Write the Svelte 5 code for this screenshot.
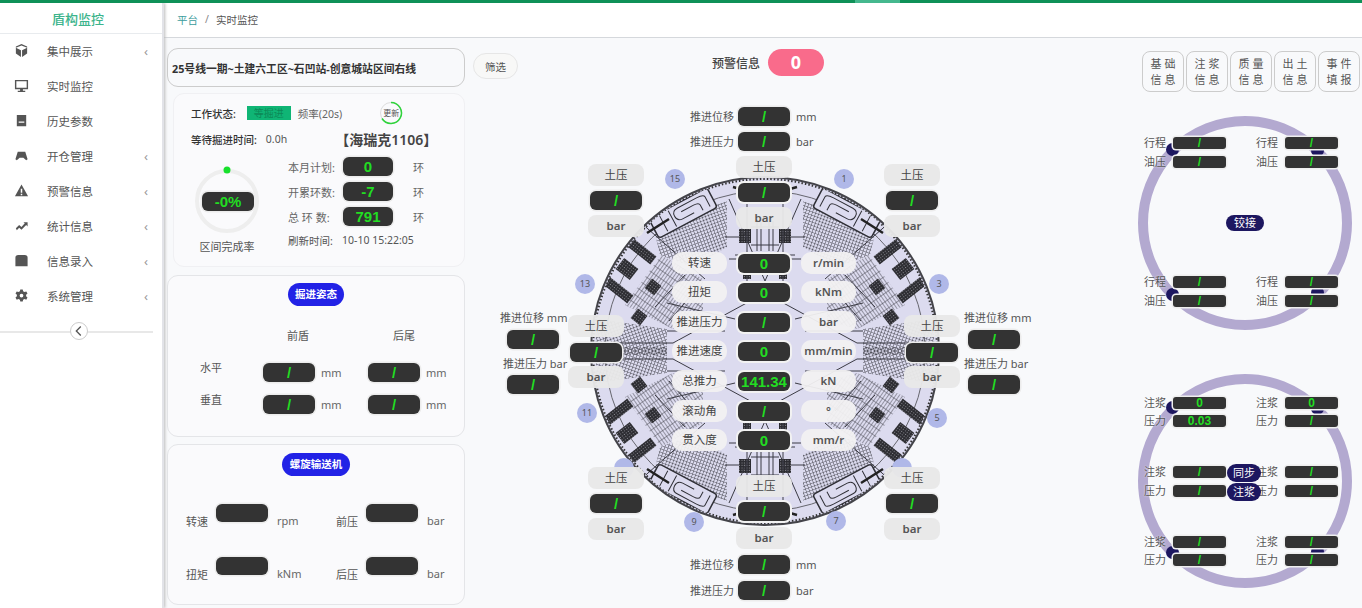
<script>
  const menu = [
    { name: "集中展示", icon: "cube", more: true },
    { name: "实时监控", icon: "monitor", more: false },
    { name: "历史参数", icon: "book", more: false },
    { name: "开仓管理", icon: "pad", more: true },
    { name: "预警信息", icon: "warn", more: true },
    { name: "统计信息", icon: "trend", more: true },
    { name: "信息录入", icon: "dome", more: true },
    { name: "系统管理", icon: "gear", more: true }
  ];
  const buttons = [["基 础", "信 息"], ["注 浆", "信 息"], ["质 量", "信 息"], ["出 土", "信 息"], ["事 件", "填 报"]];

  // stage origin is x=470, y=48 in the page
  const at = (x, y) => `left:${x - 470}px;top:${y - 48}px`;

  const rows = [
    ["转速", "0", "r/min", 263], ["扭矩", "0", "kNm", 292], ["推进压力", "/", "bar", 322],
    ["推进速度", "0", "mm/min", 351], ["总推力", "141.34", "kN", 381], ["滚动角", "/", "°", 411], ["贯入度", "0", "mm/r", 440]
  ];
  const pressure = [
    [736, 156, 183, 207, true], [736, 475, 502, 527, true],
    [588, 164, 191, 215], [884, 164, 191, 215],
    [588, 467, 494, 518], [884, 467, 494, 518],
    [568, 315, 343, 366], [904, 315, 343, 366]
  ];
  const thrust = [
    [690, 738, 796, 107, 117, "推进位移", "mm"], [690, 738, 796, 132, 142, "推进压力", "bar"],
    [690, 738, 796, 555, 565, "推进位移", "mm"], [690, 738, 796, 581, 591, "推进压力", "bar"]
  ];
  const sideThrust = [
    [500, 507, 330, 318, "推进位移 mm"], [503, 507, 375, 364, "推进压力 bar"],
    [964, 968, 330, 318, "推进位移 mm"], [964, 968, 375, 364, "推进压力 bar"]
  ];
  const badges = [
    [15, 675, 179], [1, 844, 179], [13, 585, 284], [3, 939, 284],
    [11, 587, 413], [5, 937, 418], [9, 694, 522], [7, 836, 521], ["", 624, 468], ["", 902, 468]
  ];

  const hinge = [
    ["行程", 11, "/"], ["油压", 30, "/"], ["行程", 150, "/"], ["油压", 169, "/"]
  ];
  const grout = [
    ["注浆", 13, "0", "0"], ["压力", 31, "0.03", "/"], ["注浆", 82, "/", "/"],
    ["压力", 101, "/", "/"], ["注浆", 152, "/", "/"], ["压力", 170, "/", "/"]
  ];
</script>

<div class="progress"><span></span></div>
<div class="shell">
  <aside class="sidebar">
    <div class="brand">盾构监控</div>
    {#each menu as item}
      <div class="item">
        <svg class="icon" viewBox="0 0 16 16">
          {#if item.icon === "cube"}
            <path d="M8 1l6 2.600v7.600L8.600 15V7.600L14 5 8 2.600 2 5l5.400 2.600V15L2 11.200V3.600z" />
          {:else if item.icon === "monitor"}
            <path fill-rule="evenodd" d="M1 2h14v10H9.500v1.500H12V15H4v-1.500h2.500V12H1zm1.500 1.500v7h11v-7z" />
          {:else if item.icon === "book"}
            <path fill-rule="evenodd" d="M3 2h10v12H3zm2 7v1.300h6V9z" />
          {:else if item.icon === "pad"}
            <path d="M4 4h8l2.500 8-1.500 1-3-2.500H6L3 13l-1.500-1z" />
          {:else if item.icon === "warn"}
            <path fill-rule="evenodd" d="M8 1.500L15 14H1zM7.200 6v4.500h1.600V6zm0 5.500V13h1.600v-1.500z" />
          {:else if item.icon === "trend"}
            <path d="M2 11l3.500-3.500 2.500 2 3.500-4L10 4.500h4.500V9L13 7.500 8 12.500l-2.500-2L3 13z" />
          {:else if item.icon === "dome"}
            <path d="M1.500 14V5Q1.500 2 4.500 2h7q3 0 3 3v9z" />
          {:else}
            <path fill-rule="evenodd" d="M6.700 1.500h2.600l.4 2 1.500.8 1.900-.7 1.300 2.300-1.500 1.300v1.600l1.500 1.300-1.300 2.300-1.900-.7-1.500.8-.4 2H6.700l-.4-2-1.500-.8-1.900.7-1.300-2.300 1.500-1.300V7.200L1.600 5.900l1.300-2.300 1.900.7 1.500-.8zM8 6a2 2 0 100 4 2 2 0 000-4z" />
          {/if}
        </svg>
        <span class="item-name">{item.name}</span>
        {#if item.more}<span class="chev">‹</span>{/if}
      </div>
    {/each}
    <div class="collapse">
      <span class="collapse-btn">
        <svg viewBox="0 0 18 18" width="16" height="16"><path d="M11 4L6 9l5 5" fill="none" stroke="#555" stroke-width="1.500" /></svg>
      </span>
    </div>
  </aside>

  <div class="main">
    <header class="topbar">
      <span class="crumb-link">平台</span><span class="crumb-sep">/</span><span>实时监控</span>
    </header>

    <div class="content">
      <section class="left">
        <div class="station">25号线一期~土建六工区~石凹站-创意城站区间右线</div>

        <div class="card status">
          <div class="status-row">
            <b>工作状态:</b>
            <span class="state">等掘进</span>
            <span class="freq">频率(20s)</span>
            <span class="refresh">
              <svg viewBox="0 0 24 24" width="24" height="24">
                <circle cx="12" cy="12" r="10.500" fill="none" stroke="#ddd" stroke-width="1" />
                <path d="M12 1.500A10.500 10.500 0 1 1 3 17.500" fill="none" stroke="#2fd33c" stroke-width="1.500" />
              </svg>
              <i>更新</i>
            </span>
          </div>
          <div class="status-row second-row">
            <b>等待掘进时间:</b>
            <span class="wait">0.0h</span>
            <strong>【海瑞克1106】</strong>
          </div>
          <div class="status-body">
            <div class="gauge-col">
              <div class="gauge">
                <svg viewBox="0 0 70 76" width="70" height="76">
                  <circle cx="35" cy="41" r="30" fill="none" stroke="#eeeeee" stroke-width="4" />
                  <circle cx="35" cy="10" r="3.500" fill="#17e02c" />
                </svg>
                <span class="val gauge-val">-0%</span>
              </div>
              <div class="gauge-label">区间完成率</div>
            </div>
            <div class="plan">
              <div class="plan-row"><label>本月计划:</label><span class="val small">0</span><em>环</em></div>
              <div class="plan-row"><label>开累环数:</label><span class="val small">-7</span><em>环</em></div>
              <div class="plan-row"><label>总 环 数:</label><span class="val small">791</span><em>环</em></div>
              <div class="plan-time"><label>刷新时间:</label><span>10-10 15:22:05</span></div>
            </div>
          </div>
        </div>

        <div class="card attitude">
          <div class="pill-wrap"><span class="pill">掘进姿态</span></div>
          <div class="att-grid">
            <span></span><span class="att-head">前盾</span><span class="att-head">后尾</span>
            <span class="att-name">水平</span>
            <div class="att-cell"><span class="val">/</span><em>mm</em></div>
            <div class="att-cell"><span class="val">/</span><em>mm</em></div>
            <span class="att-name">垂直</span>
            <div class="att-cell"><span class="val">/</span><em>mm</em></div>
            <div class="att-cell"><span class="val">/</span><em>mm</em></div>
          </div>
        </div>

        <div class="card screw">
          <div class="pill-wrap"><span class="pill">螺旋输送机</span></div>
          <div class="screw-grid">
            <div class="screw-cell"><label>转速</label><span class="val"></span><em>rpm</em></div>
            <div class="screw-cell"><label>前压</label><span class="val"></span><em>bar</em></div>
            <div class="screw-cell"><label>扭矩</label><span class="val"></span><em>kNm</em></div>
            <div class="screw-cell"><label>后压</label><span class="val"></span><em>bar</em></div>
          </div>
        </div>
      </section>

      <section class="stage">
        <button class="filter">筛选</button>
        <div class="alert"><span>预警信息</span><b>0</b></div>

        <svg class="cutter" viewBox="-180 -180 360 360" width="360" height="360">
          <defs>
            <pattern id="mesh" width="3.200" height="3.200" patternUnits="userSpaceOnUse" patternTransform="rotate(20)">
              <path d="M0 0H3.200M0 0V3.200" stroke="#34343c" stroke-width=".9" fill="none" />
            </pattern>
            <pattern id="stripes" width="3" height="7" patternUnits="userSpaceOnUse" patternTransform="rotate(-35)">
              <path d="M0 0V7M0 0H3" stroke="#3c3c44" stroke-width=".9" fill="none" />
            </pattern>
            <pattern id="dense" width="2.500" height="2.500" patternUnits="userSpaceOnUse">
              <rect width="2.500" height="2.500" fill="#2b2b30" />
              <path d="M0 0h1v1H0z" fill="#8a8a92" />
            </pattern>
            <clipPath id="disc"><circle r="172" /></clipPath>
            <g id="quad">
              <polygon points="38,-104 38,-150 112,-126 105,-96 72,-84" fill="url(#mesh)" />
              <g transform="translate(82,-138) rotate(28)" fill="none" stroke="#2f2f36" stroke-width="1.500">
                <rect x="-33" y="-11" width="66" height="22" rx="3" fill="#dcdbef" />
                <path d="M-27 7V-4q0-3 8-3h22q6 0 6 6t-6 6H-10M-19 7V1q0-3 6-3h14M12 -9V9M22 -9V9" stroke-width="1" />
              </g>
              <polygon points="62,-72 104,-96 140,-46 92,-22 62,-30" fill="url(#stripes)" />
              <polygon points="98,-22 168,-32 170,4 98,4" fill="url(#mesh)" />
              <g fill="url(#dense)">
                <rect x="-17" y="-5" width="34" height="10" transform="translate(125,-101) rotate(-38)" />
                <rect x="-17" y="-5" width="34" height="10" transform="translate(148,-62) rotate(-38)" />
                <rect x="-9" y="-7" width="18" height="14" transform="translate(138,-82) rotate(-38)" />
                <rect x="-6" y="-6" width="12" height="12" transform="translate(112,-64) rotate(-38)" />
                <rect x="-6" y="-6" width="12" height="12" transform="translate(126,-34) rotate(-38)" />
                <rect x="14" y="-122" width="12" height="14" />
                <rect x="14" y="-80" width="8" height="8" />
              </g>
              <path d="M0 -58L92 -8M0 -70L36 -152M18 -60L18 -160M60 -72L158 -158M92 -8L170 -8M26 -114H40M0 -124H14M0 -106H14M0 -96H30M30 -32L98 -48M40 -20L98 -20M4 -100V-130M8 -100V-130M10 -92H36M70 -60L96 -30M80 -76L110 -44"
                fill="none" stroke="#3b3b44" stroke-width="1" />
              <path d="M18 -160L32 -164M96 -132L118 -118" stroke="#222" stroke-width="2.500" fill="none" />
            </g>
          </defs>
          <circle r="174" fill="#dcdbef" stroke="#44444a" stroke-width="2" />
          <circle r="172" fill="none" stroke="#333" stroke-width="2" stroke-dasharray="1.500 2" />
          <circle r="160" fill="none" stroke="#66666e" stroke-width="1" />
          <g clip-path="url(#disc)">
            <use href="#quad" />
            <use href="#quad" transform="scale(-1,1)" />
            <use href="#quad" transform="scale(1,-1)" />
            <use href="#quad" transform="scale(-1,-1)" />
          </g>
        </svg>

        {#each badges as [n, x, y]}
          <span class="badge" style={at(x - 10, y - 10)}>{n}</span>
        {/each}

        {#each thrust as [lx, bx, ux, by, ty, label, unit]}
          <span class="txt" style={at(lx, ty - 8)}>{label}</span>
          <span class="val pin" style={at(bx, by)}>/</span>
          <span class="txt" style={at(ux, ty - 8)}>{unit}</span>
        {/each}
        {#each sideThrust as [lx, bx, by, ty, label]}
          <span class="txt" style={at(lx, ty - 8)}>{label}</span>
          <span class="val pin" style={at(bx, by)}>/</span>
        {/each}

        {#each pressure as [x, t1, t2, t3, ring]}
          <span class="tag" style={at(x, t1)}>土压</span>
          <span class="val pin" class:ringed={ring} style={at(x + 2, t2)}>/</span>
          <span class="tag bold" style={at(x, t3)}>bar</span>
        {/each}

        {#each rows as [label, value, unit, y]}
          <span class="tag light" style={at(672, y - 11)}>{label}</span>
          <span class="val pin ringed" style={at(738, y - 9)}>{value}</span>
          <span class="tag light bold" style={at(801, y - 11)}>{unit}</span>
        {/each}
      </section>

      <section class="right">
        <div class="btns">
          {#each buttons as b}
            <div class="info-btn">{b[0]}<br />{b[1]}</div>
          {/each}
        </div>

        <div class="ring first">
          <i class="knob" style="left:18px;top:17px"></i>
          <i class="knob" style="left:163px;top:18px"></i>
          <i class="knob" style="left:18px;top:162px"></i>
          <i class="knob" style="left:163px;top:160px"></i>
          {#each hinge as [label, y, value]}
            <div class="reading" style="left:-4px;top:{y}px"><span>{label}</span><b>{value}</b></div>
            <div class="reading" style="left:108px;top:{y}px"><span>{label}</span><b>{value}</b></div>
          {/each}
          <span class="ring-tag" style="left:78px;top:89px">铰接</span>
        </div>

        <div class="ring second">
          <i class="knob" style="left:18px;top:17px"></i>
          <i class="knob" style="left:163px;top:18px"></i>
          <i class="knob" style="left:18px;top:162px"></i>
          <i class="knob" style="left:163px;top:161px"></i>
          {#each grout as [label, y, a, b]}
            <div class="reading" style="left:-4px;top:{y}px"><span>{label}</span><b>{a}</b></div>
            <div class="reading" style="left:108px;top:{y}px"><span>{label}</span><b>{b}</b></div>
          {/each}
          <span class="ring-tag wide" style="left:79px;top:80px">同步</span>
          <span class="ring-tag wide" style="left:79px;top:99px">注浆</span>
        </div>
      </section>
    </div>
  </div>
</div>

<style>
  :global(body) {
    margin: 0;
    background: #f8f9fb;
    font-family: "Noto Sans", "Noto Sans CJK SC", sans-serif;
    color: #555;
    overflow: hidden;
  }
  em { font-style: normal; }
  .progress { height: 3px; background: #0f9158; position: relative; }
  .progress span { display: block; position: absolute; left: 855px; width: 45px; height: 3px; background: #45b88e; }
  .shell { display: flex; height: 605px; overflow: hidden; }

  .sidebar { width: 162px; flex: none; background: #fff; box-shadow: 1px 0 3px #bbb; border-right: 2px solid #e2e3e8; z-index: 2; }
  .brand { height: 30px; line-height: 32px; text-align: center; font-size: 13px; font-weight: 500; color: #3cb48c; border-bottom: 1px solid #e8ebee; padding-right: 6px; margin-bottom: -1px; }
  .item { height: 35px; display: flex; align-items: center; font-size: 11.500px; color: #555; }
  .icon { width: 15px; height: 15px; margin-left: 14px; fill: #555; flex: none; }
  .item-name { margin-left: 18px; }
  .chev { margin-left: auto; margin-right: 14px; color: #999; font-size: 13px; }
  .collapse { width: 153px; height: 2px; background: #e8e8e8; margin-top: 18px; position: relative; }
  .collapse-btn { position: absolute; left: 70px; top: -9px; width: 18px; height: 18px; border: 1px solid #ccc; border-radius: 50%; background: #fff; box-sizing: border-box; display: flex; align-items: center; justify-content: center; }

  .main { flex: 1; min-width: 0; display: flex; flex-direction: column; }
  .topbar { flex: none; background: #fff; border-bottom: 1px solid #d5d8dc; display: flex; align-items: center; padding-left: 13px; font-size: 10.500px; color: #555; padding-bottom: 2px; box-sizing: border-box; height: 35px; }
  .crumb-link { color: #3a9c9c; }
  .crumb-sep { margin: 0 7px; color: #888; }
  .content { flex: 1; display: flex; padding-top: 10px; min-height: 0; }

  .left { width: 298px; margin-left: 3px; flex: none; display: flex; flex-direction: column; }
  .station { height: 39px; box-sizing: border-box; border: 1px solid #ccc; border-radius: 11px; font-size: 10.800px; font-weight: 700; color: #333; display: flex; align-items: center; padding-left: 4px; }
  .card { border: 1px solid #e4e5e8; border-radius: 11px; background: #fafafc; box-sizing: border-box; }
  .status { height: 174px; margin: 6px 0 0 6px; width: 292px; border-color: #f0f0f3; padding: 9px 0 0 17px; }
  .status-row { display: flex; align-items: center; height: 20px; font-size: 10.500px; }
  .status-row b { font-weight: 500; color: #333; }
  .state { margin-left: 11px; width: 44px; height: 14px; line-height: 14px; background: #0fb575; color: #0c8a58; text-align: center; font-size: 10px; }
  .freq { margin-left: 7px; color: #666; }
  .refresh { margin-left: 37px; position: relative; width: 24px; height: 24px; }
  .refresh svg { display: block; }
  .refresh i { position: absolute; inset: 0; font-style: normal; font-size: 8px; line-height: 24px; text-align: center; color: #555; }
  .second-row { margin-top: 6px; }
  .wait { margin-left: 9px; color: #555; }
  .second-row strong { margin-left: 48px; font-size: 14px; font-weight: 600; color: #444; white-space: nowrap; }
  .status-body { display: flex; margin-top: 8px; }
  .gauge-col { width: 97px; flex: none; }
  .gauge { position: relative; width: 70px; height: 76px; margin-left: 1px; margin-top: 3px; }
  .gauge svg { display: block; }
  .gauge-val { position: absolute; left: 10px; top: 32px; width: 50px; font-size: 13px; }
  .gauge-label { font-size: 11px; color: #555; width: 70px; text-align: center; margin: 2px 0 0 1px; white-space: nowrap; }
  .plan { display: flex; flex-direction: column; gap: 6px; font-size: 11px; }
  .plan-row { display: flex; align-items: center; height: 19px; }
  .plan-row label { width: 55px; color: #666; }
  .plan-row em { margin-left: 20px; color: #666; }
  .plan-time { display: flex; margin-top: 1px; color: #555; font-size: 10.500px; }
  .plan-time label { width: 54px; }

  .val { display: block; width: 52px; height: 19px; background: #333; border-radius: 6px; color: #22dd22; font: 700 15px/19px "Liberation Sans", sans-serif; text-align: center; box-shadow: 0 0 0 1.500px #ececec; flex: none; overflow: hidden; }
  .val.small { width: 50px; }

  .attitude { height: 162px; margin-top: 8px; }
  .screw { height: 161px; margin-top: 7px; }
  .pill-wrap { display: flex; justify-content: center; margin-top: 7px; }
  .pill { background: #2222e6; color: #fff; border-radius: 12px; font-size: 10.500px; font-weight: 600; height: 23px; line-height: 23px; padding: 0 7px; }
  .screw .pill-wrap { margin-top: 8px; }
  .screw .pill { padding: 0 8px; }
  .att-grid { display: grid; grid-template-columns: 95px 105px 90px; margin-top: 19px; font-size: 11px; }
  .att-head { height: 31px; padding-left: 24px; line-height: 22px; color: #555; font-size: 11px; }
  .att-head:nth-child(3) { padding-left: 25px; }
  .att-name { padding: 4px 0 0 32px; line-height: 16px; color: #555; }
  .att-cell { display: flex; align-items: center; height: 32px; }
  .att-cell em { margin-left: 6px; margin-top: 1px; font-size: 11px; color: #666; }
  .screw-grid { display: grid; grid-template-columns: 150px 130px; grid-auto-rows: 53px; margin-top: 28px; padding-left: 18px; font-size: 11px; }
  .screw-cell { display: flex; align-items: flex-start; color: #555; }
  .screw-cell .val { height: 18px; }
  .screw-cell label { width: 30px; margin-top: 9px; }
  .screw-cell em { margin: 9px 0 0 9px; color: #666; }

  .stage { position: relative; width: 665px; flex: none; margin-left: 5px; font-size: 11px; }
  .filter { position: absolute; left: 3px; top: 5px; width: 45px; height: 26px; border: 1px solid #e6e6e6; border-radius: 13px; background: #f8f8f7; color: #555; font: 10.500px "Noto Sans", "Noto Sans CJK SC", sans-serif; padding: 0; }
  .alert { position: absolute; left: 242px; top: 1px; display: flex; align-items: center; gap: 8px; font-size: 12px; color: #444; font-weight: 500; height: 27px; }
  .alert b { width: 56px; height: 27px; line-height: 27px; border-radius: 14px; background: #f96b8b; color: #fff; text-align: center; font-size: 18px; font-weight: 700; }
  .cutter { position: absolute; left: 115px; top: 123px; }
  .badge { position: absolute; width: 20px; height: 20px; border-radius: 50%; background: #b0b8e8; color: #555; font-size: 9px; line-height: 20px; text-align: center; }
  .txt { position: absolute; line-height: 16px; white-space: nowrap; color: #555; font-size: 11px; }
  .pin { position: absolute; }
  .ringed { box-shadow: 0 0 0 2px #f2f2f2; }
  .tag { position: absolute; width: 56px; height: 22px; line-height: 22px; border-radius: 8px; text-align: center; background: rgba(232, 232, 232, 0.96); color: #444; font-size: 11.500px; white-space: nowrap; }
  .tag.light { width: 55px; border-radius: 10px; background: rgba(242, 241, 242, 0.94); }
  .tag.bold { font-weight: 600; color: #555; }

  .right { flex: 1; min-width: 0; display: flex; flex-direction: column; align-items: flex-start; }
  .btns { display: flex; gap: 2px; margin: 3px 0 0 7px; flex: none; }
  .info-btn { width: 42px; height: 41px; box-sizing: border-box; border: 1px solid #ccc; border-radius: 8px; font-size: 11px; line-height: 16px; text-align: center; color: #555; padding-top: 4px; white-space: nowrap; }
  .ring { position: relative; width: 214px; height: 214px; box-sizing: border-box; border: 10px solid #b3a9d0; border-radius: 50%; margin-left: 3px; flex: none; }
  .ring.first { margin-top: 24px; }
  .ring.second { margin-top: 44px; }
  .knob { position: absolute; width: 13px; height: 13px; border-radius: 50%; background: #1d1760; }
  .reading { position: absolute; display: flex; align-items: center; height: 12px; font-size: 11px; color: #555; }
  .reading span { width: 29px; line-height: 12px; text-shadow: 0 0 2px #fff; }
  .reading b { width: 53px; height: 12px; line-height: 12px; background: #333; border-radius: 3px; color: #22dd22; font: 700 12px/12px "Liberation Sans", sans-serif; text-align: center; box-shadow: 0 0 0 1.500px #eee; }
  .ring-tag { position: absolute; width: 38px; height: 16px; line-height: 16px; border-radius: 9px; background: #1d1760; color: #fff; font-size: 11px; text-align: center; }
  .ring-tag.wide { width: 34px; height: 18px; line-height: 18px; }
</style>
